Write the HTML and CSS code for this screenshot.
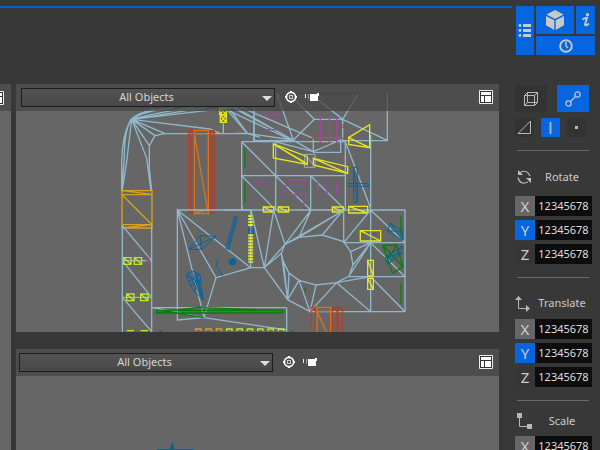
FILE: index.html
```
<!DOCTYPE html>
<html lang="en">
<head>
<meta charset="utf-8">
<title>Viewports</title>
<link rel="stylesheet" href="styles.css">
</head>
<body>
<svg class="defs" aria-hidden="true">
  <symbol id="target" viewBox="0 0 12 12"><circle cx="6" cy="6" r="4.6" fill="none" stroke="#fff" stroke-width="1.7"/><path d="M6 0v2M6 10v2M0 6h2M10 6h2" stroke="#fff" stroke-width="2"/><rect x="4.5" y="4.5" width="3" height="3" fill="none" stroke="#ccc"/></symbol>
  <symbol id="camera" viewBox="0 0 14 10"><path d="M.5 2v4" stroke="#eee"/><path d="M3 2h1v5H3z" fill="#999"/><path d="M5 2h7V1h2v3h-1v5H5z" fill="#fff"/></symbol>
  <symbol id="layout" viewBox="0 0 14 14"><path fill="#222" d="M0 0h14v14H0z"/><path d="M.5 .5h13v13H.5z" fill="#333" stroke="#eee"/><path d="M2 2h10v3H2zM2 6h3v6H2zM6 6h6v6H6z" fill="#fff"/></symbol>
</svg>
<div class="app">
  <main class="workspace">
    <header class="topbar"></header>
    <div class="views">
      <section class="side-view" aria-label="Adjacent view">
        <div class="side-head"><svg class="side-icon"><use href="#layout"/></svg></div>
      </section>
      <div class="stack">
        <section class="view view-top" aria-label="Top view">
          <svg class="scene" viewBox="16 84 483 248" preserveAspectRatio="xMinYMin slice">
            <g transform="translate(110 85) scale(.33333)" class="wire">
              <path d="M35 320V230Q37 150 62 104Q85 83 135 72M65 103Q42 135 43 220L35 320M65 103L50 230 37 315M65 103L110 220 123 318M65 103L118 182M65 103L135 152M65 103L165 146M65 103L300 132 330 145M65 103L370 67M65 103L290 67M65 103Q100 77 190 69M65 103Q140 82 250 68M165 146H412M165 146L135 152 118 182V250L125 318M340 115V146M355 66L412 145 450 157M432 80V168"/>
              <path class="yellow" d="M329 68h20v20h-20zl20 20M349 68l-20 20M331 90h18v22h-18zl18 22M349 90l-18 22"/>
              <path class="red" d="M236 137h14v248h-14zM300 137h13v248h-13zM243 150v225M306 150v225M236 137l14 12M250 137l-14 12M236 385l14-12M250 385l-14-12M300 137l13 12M313 137l-13 12M300 385l13-12M313 385l-13-12"/>
              <path class="orange" d="M253 136h42v250h-42zM253 146h42M253 375h42M253 148l40 228M253 384l40-9"/>
              <path class="gold" d="M36 317h90v112h-90zM36 329h90M36 317l90 11M36 329l90 90M36 419h90M36 429l90-10"/>
            </g>
            <g transform="translate(235 85) scale(.33333)" class="wire">
              <path d="M-45 50L37 145 175 165M0 145H37M-40 50L175 165M-30 50L235 200M-10 55L235 160M-45 65L165 163M57 35V167H175M125 25L175 165 238 103M160 25L238 103H323L370 25M225 25L323 103 457 166V25M323 103V167H457M235 160V202H317V162M120 170L235 200 317 165"/>
              <path class="pale" d="M235 160H318"/>
              <path class="deep" d="M140 26H386"/>
              <path d="M20 170H331M20 272H331M-33 375H510M20 170V375M122 170V375M227 272V375M331 165V375M407 150V375M20 170L122 272 227 375M20 272L122 375M227 272L331 375M331 170L407 370"/>
              <path class="pale" d="M209 208h31v39h-31zM220 220l15 20"/>
              <path class="brown" d="M230 120h100v40H230l100-35"/>
              <path class="magenta" d="M88 46h52M88 90h52M88 134h52M256 93v80M283 93v80M305 93v80M52 302q20-27 50 0M155 285h55v17h-65M135 335l22-25M162 330h50v25h-18M248 290v43M276 290v43M305 290v43"/>
              <path class="yellow thick" d="M341 158L404 119V188L341 178V158L404 188M115 177L217 215V238L115 219V177L217 238M115 177L210 232M235 220L338 245V265L235 240V220L338 265"/>
              <path class="green thick" d="M30 188v60M30 293v60"/>
              <path class="blue" d="M356 247h11v105h-11zM337 296h65v8h-65M356 247l11 105"/>
              <path class="yellow thick" d="M85 366h31v15H85zl31 15M130 366h31v15h-31zl31 15M292 366h33v15h-33zl33 15M341 364h57v20h-57zl57 20"/>
            </g>
            <g transform="translate(110 205) scale(.33333)" class="wire">
              <path d="M37 60V380M125 60V380M37 62L125 167M37 167L125 277M37 277L125 380M37 167H125M37 277H125M202 15V345L282 338L202 15L422 188M202 15H422M202 15L318 218M282 338L318 218 422 188V15M127 308H530M127 308L282 338 530 375M395 15V0"/>
              <path class="lime thick" d="M41 158h22v20H41zl22 20M73 158h22v20H73zl22 20M50 267h22v20H50zl22 20M92 267h22v20H92zl22 20M50 377h22M92 377h22"/>
              <path class="magenta" d="M114 155l4 25M109 167h12"/>
              <path class="blue" d="M237 133L270 92 318 94 275 133H237L318 94M270 92L275 133M374 34l8 3-25 96-9-3zM378 38l-25 92M326 162l-8 20 20 32"/>
              <path class="blue" d="M228 210Q245 190 270 208L273 242 280 285 247 252zM235 207L280 285 245 200M228 210L270 235 255 202 280 285M235 230L270 208M240 242L270 225M265 205L255 255"/>
              <circle cx="367" cy="170" r="11" fill="#0864a0"/>
              <path class="dash" d="M422 30V67M422 88V173"/>
              <path class="blue" d="M416 69h13v16h-13zl13 16"/>
              <path class="green" d="M140 316H518v8H140zM145 323L276 306M270 308L515 317M160 318L282 338"/>
              <path class="gold thick" d="M257 378v-6h16v6M288 378v-6h16v6M319 378v-6h16v6"/>
              <path class="lime thick" d="M350 378v-6h16v6M381 378v-6h16v6M412 378v-6h16v6M443 378v-6h16v6M474 378v-6h16v6M505 378v-6h16v6"/>
              <path class="green thick" d="M148 379h8M543 379h8"/>
            </g>
            <g transform="translate(235 205) scale(.33333)" class="wire">
              <path d="M155 308V380M20 0V15M122 0L116 15M150 118L192 97 262 90 326 110 347 140 354 180 342 213 305 233 243 240 192 226 162 204 145 170 139 145zL228 15 192 97 322 18 262 90M150 118L322 18M150 118L116 15 88 188 48 15M88 188L150 118M139 145L88 188H48M88 188L158 284 225 320H510V15M158 284L139 145M158 284L145 170M158 284L162 204M158 284L192 226 225 320 243 240M225 320L305 233 407 320V15M510 113H326V15M510 215H342M407 215L305 233M407 215L510 320M407 113L510 215M407 15L510 113M326 113L407 15M347 140L407 113 354 180M342 213L407 113"/>
              <path class="green thick" d="M498 33v60M498 235v60M211 248v12"/>
              <path class="green" d="M443 121L485 120 504 185 473 205zL504 185M485 120L455 170"/>
              <path class="blue" d="M466 55L502 78V106L457 78zL502 106M457 78L502 78M450 157L501 124 500 145 458 178zL500 145M458 178L501 124"/>
              <path class="yellow thick" d="M376 77h61v31h-61zl61 31M398 166h17v47h-17zl17 47M398 220h17v33h-17zl17 33"/>
              <path class="red" d="M228 307h14v73M228 307v73M292 380v-73h14v73M310 380v-73h13v73M228 307l14 12M242 307l-14 12M292 307l14 12M306 307l-14 12M310 307l13 12"/>
              <path class="orange" d="M246 380v-73h41v73M246 319h41M246 319L274 380"/>
            </g>
          </svg>
          <div class="view-head">
            <select class="filter" aria-label="Top view filter"><option>All Objects</option></select>
            <button class="tool" aria-label="Center view"><svg class="target"><use href="#target"/></svg></button>
            <button class="tool" aria-label="Camera"><svg class="camera"><use href="#camera"/></svg></button>
            <button class="tool layout" aria-label="Layout"><svg class="layout-icon"><use href="#layout"/></svg></button>
          </div>
        </section>
        <section class="view view-bottom" aria-label="Front view">
          <svg class="scene" viewBox="16 349 483 101" preserveAspectRatio="xMinYMin slice"><path d="M157 449h13l3-8 1 8h20v2h-37z" fill="#08608c"/></svg>
          <div class="view-head compact">
            <select class="filter" aria-label="Front view filter"><option>All Objects</option></select>
            <button class="tool" aria-label="Center view"><svg class="target"><use href="#target"/></svg></button>
            <button class="tool" aria-label="Camera"><svg class="camera"><use href="#camera"/></svg></button>
            <button class="tool layout" aria-label="Layout"><svg class="layout-icon"><use href="#layout"/></svg></button>
          </div>
        </section>
      </div>
    </div>
  </main>
  <aside class="sidebar">
    <nav class="tabs" aria-label="Panels">
      <button class="btn on tall" aria-label="List"><svg width="14" height="14" viewBox="0 0 14 14" fill="#c8ccd0"><path d="M5 0h8v3H5zM5 5h8v3H5zM5 10h8v3H5z"/><circle cx="2" cy="1.500" r="1.400"/><circle cx="2" cy="6.500" r="1.400"/><circle cx="2" cy="11.500" r="1.400"/></svg></button>
      <button class="btn on" aria-label="Object"><svg width="20" height="20" viewBox="0 0 20 20" fill="#c8c8c8"><path d="M10 0l8.500 4.500L10 9 1.500 4.500zM1 6l8.300 4.300V20L1 15.300zM19 6l-8.300 4.300V20L19 15.300z"/></svg></button>
      <button class="btn on" aria-label="Information"><svg width="8" height="14" viewBox="0 0 8 14"><circle cx="5.500" cy="1.700" r="1.700" fill="#c8c8c8"/><path d="M.5 6.500Q3 4.500 5 5L3 11.500Q3.500 13.500 7 10.500" fill="none" stroke="#c8c8c8" stroke-width="2"/></svg></button>
      <button class="btn on wide" aria-label="History"><svg width="14" height="14" viewBox="0 0 14 14" fill="none" stroke="#c8c8c8" stroke-width="2"><circle cx="7" cy="7" r="5.800"/><path d="M7 3v4l2 2" stroke-width="1.500"/></svg></button>
    </nav>
    <div class="modes">
      <button class="btn mode" aria-label="Box"><svg width="14" height="14" viewBox="0 0 14 14" fill="none" stroke="#b8b8b8"><path d="M.5 3.500h10v10h-10zM3.500 .5h10v10h-10zM.5 3.500l3-3M10.500 3.500l3-3M.5 13.500l3-3M10.500 13.500l3-3"/></svg></button>
      <button class="btn mode on" aria-label="Spline"><svg width="16" height="16" viewBox="0 0 16 16" fill="none" stroke="#c0c4cc" stroke-width="1.300"><circle cx="12.500" cy="3.500" r="2.600"/><circle cx="3.500" cy="12.500" r="2.600"/><path d="M10.500 5.500L5.500 10.500"/></svg></button>
    </div>
    <div class="levels">
      <button class="btn level" aria-label="Face"><svg width="15" height="15" viewBox="0 0 15 15" fill="none" stroke="#b8b8b8"><path d="M1 13.500L13.500 1v12.500z"/></svg></button>
      <button class="btn level on" aria-label="Edge"><svg width="3" height="12" viewBox="0 0 3 12"><path d="M.5 0h2v12h-2z" fill="#a8b0bc"/></svg></button>
      <button class="btn level" aria-label="Vertex"><svg width="3" height="3" viewBox="0 0 3 3"><path d="M0 0h3v3H0z" fill="#b4b8c0"/></svg></button>
    </div>
    <hr class="rule">
    <section class="group rotate">
      <h2 class="title"><svg class="title-icon" viewBox="0 0 18 18"><path d="M5 4.500Q12 .8 15 8M13 14Q5 17.500 3 9.500" fill="none" stroke="#b8b8b8" stroke-width="1.200"/><path d="M3 2v5h5zM16 15v-5h-5z" fill="#c0c0c0"/></svg><span class="name">Rotate</span></h2>
      <div class="fields">
        <label class="axis gray" for="rx">X</label><input class="num" id="rx" value="12345678">
        <label class="axis blue-axis" for="ry">Y</label><input class="num" id="ry" value="12345678">
        <label class="axis" for="rz">Z</label><input class="num" id="rz" value="12345678">
      </div>
    </section>
    <hr class="rule">
    <section class="group">
      <h2 class="title"><svg class="title-icon" viewBox="0 0 18 18"><path d="M3.500 3v11.500h9" fill="none" stroke="#b8b8b8"/><path d="M0 6l3.500-4L7 6zM11 11l4 3.500-4 3.500z" fill="#b8b8b8"/></svg><span class="name">Translate</span></h2>
      <div class="fields">
        <label class="axis gray" for="tx">X</label><input class="num" id="tx" value="12345678">
        <label class="axis blue-axis" for="ty">Y</label><input class="num" id="ty" value="12345678">
        <label class="axis" for="tz">Z</label><input class="num" id="tz" value="12345678">
      </div>
    </section>
    <hr class="rule">
    <section class="group scale">
      <h2 class="title"><svg class="title-icon" viewBox="0 0 18 18"><path d="M4.500 4v10.500h9" fill="none" stroke="#b8b8b8"/><path d="M2 1h5v5H2zM12 12h5v5h-5z" fill="#b8b8b8"/></svg><span class="name">Scale</span></h2>
      <div class="fields">
        <label class="axis gray" for="sx">X</label><input class="num" id="sx" value="12345678">
      </div>
    </section>
  </aside>
</div>
</body>
</html>
```
FILE: styles.css
```
* { box-sizing: border-box; }
body {
  margin: 0;
  height: 100vh;
  overflow: hidden;
  background: #383838;
  color: #ccc;
  font: 11px/16px "Noto Sans", "Open Sans", sans-serif;
}
button, input, select { font: inherit; color: inherit; border: 0; border-radius: 0; padding: 0; margin: 0; }
svg { display: block; flex: none; }
.defs { position: absolute; width: 0; height: 0; }

.app { display: grid; grid-template-columns: 1fr 88px; height: 100%; }
.workspace { display: flex; flex-direction: column; min-width: 0; }
.topbar { flex: none; height: 78px; margin-top: 6px; border-top: 2px solid #0760d0; }
.views { flex: 1; display: grid; grid-template-columns: 11px 1fr; gap: 5px; padding-right: 13px; min-height: 0; }
.side-view { background: #666; overflow: hidden; }
.side-head { display: flex; align-items: center; justify-content: flex-end; height: 27px; padding-right: 7px; background: #4e4e4e; }
.side-icon { width: 14px; height: 14px; }
.stack { display: grid; grid-template-rows: 248px 1fr; gap: 17px; min-height: 0; }

.view { display: grid; grid-template: 27px 1fr / 1fr; background: #666; overflow: hidden; min-height: 0; }
.scene { grid-area: 1 / 1 / 3 / 2; width: 100%; height: 100%; }
.view-head {
  grid-area: 1 / 1;
  position: relative;
  z-index: 1;
  display: flex;
  align-items: center;
  gap: 8px;
  padding: 0 6px 1px 5px;
  background: rgba(70, 70, 70, .75);
}
.view-head::after {
  content: "";
  position: absolute;
  left: 246px;
  top: 12px;
  border: 5px solid transparent;
  border-top-color: #ddd;
  border-bottom: 0;
}
.compact { padding-left: 3px; }
.compact::after { left: 244px; }
.filter {
  appearance: none;
  width: 254px;
  height: 19px;
  padding: 0 5px 0 2px;
  border: 1px solid #1c1c1c;
  background: linear-gradient(#535353, #484848);
  text-align-last: center;
  color: #d4d4d4;
}
.tool { display: grid; place-items: center; background: none; }
.filter + .tool { margin-left: 2px; }
.target { width: 12px; height: 12px; }
.camera { width: 14px; height: 10px; }
.layout { margin-left: auto; }
.layout-icon { width: 14px; height: 14px; }

.wire path { fill: none; stroke: #90b8ca; stroke-width: 4; }
.wire .thick { stroke-width: 4; }
.wire .pale { stroke: #a4b0b6; stroke-width: 3; }
.wire .deep { stroke: #285878; }
.wire .yellow { stroke: #e6e620; }
.wire .lime { stroke: #bde827; }
.wire .gold { stroke: #d8a020; }
.wire .orange { stroke: #e07018; }
.wire .red { stroke: #b83a26; stroke-width: 3; }
.wire .brown { stroke: #80564e; stroke-width: 3; }
.wire .magenta { stroke: #9c489f; }
.wire .green { stroke: #078007; }
.wire .blue { stroke: #0864a0; stroke-width: 3; }
.wire .dash { stroke: #dce431; stroke-width: 15; stroke-dasharray: 6 3; }

.sidebar { display: flex; flex-direction: column; padding: 6px 0 0 3px; overflow: hidden; }
.btn { display: grid; place-items: center; background: #333; }
.on { background: #0566e0; }
.tabs { flex: none; display: grid; grid-template: 28px 19px / 18px 1fr 19px; gap: 2px; margin: 0 5px 30px 1px; }
.tall { grid-row: span 2; }
.wide { grid-column: span 2; }
.modes { display: flex; gap: 10px; }
.mode { width: 32px; height: 27px; }
.levels { display: flex; gap: 7px; margin: 6px 0 13px; }
.level { width: 19px; height: 19px; }
.rule { flex: none; width: 72px; height: 1px; margin: 0 0 0 2px; border: 0; background: #696969; }
.group { flex: none; padding: 15px 0 13px; }
.rotate { padding-top: 16px; }
.scale { padding-top: 10px; }
.title { display: flex; align-items: center; width: 76px; height: 20px; margin: 0 0 6px; font-size: 11px; font-weight: 400; }
.rotate .title { margin-bottom: 9px; }
.scale .title { margin-bottom: 5px; }
.title-icon { width: 18px; height: 18px; }
.name { flex: 1; text-align: center; }
.fields { display: grid; grid-template-columns: 20px 57px; grid-auto-rows: 20px; row-gap: 4px; }
.axis { display: grid; place-items: center; background: #363636; font-size: 15px; line-height: 20px; }
.gray { background: #666; }
.blue-axis { background: #0566e0; }
.num { width: 100%; background: #0d0d0d; color: #ddd; text-align: center; }
```
